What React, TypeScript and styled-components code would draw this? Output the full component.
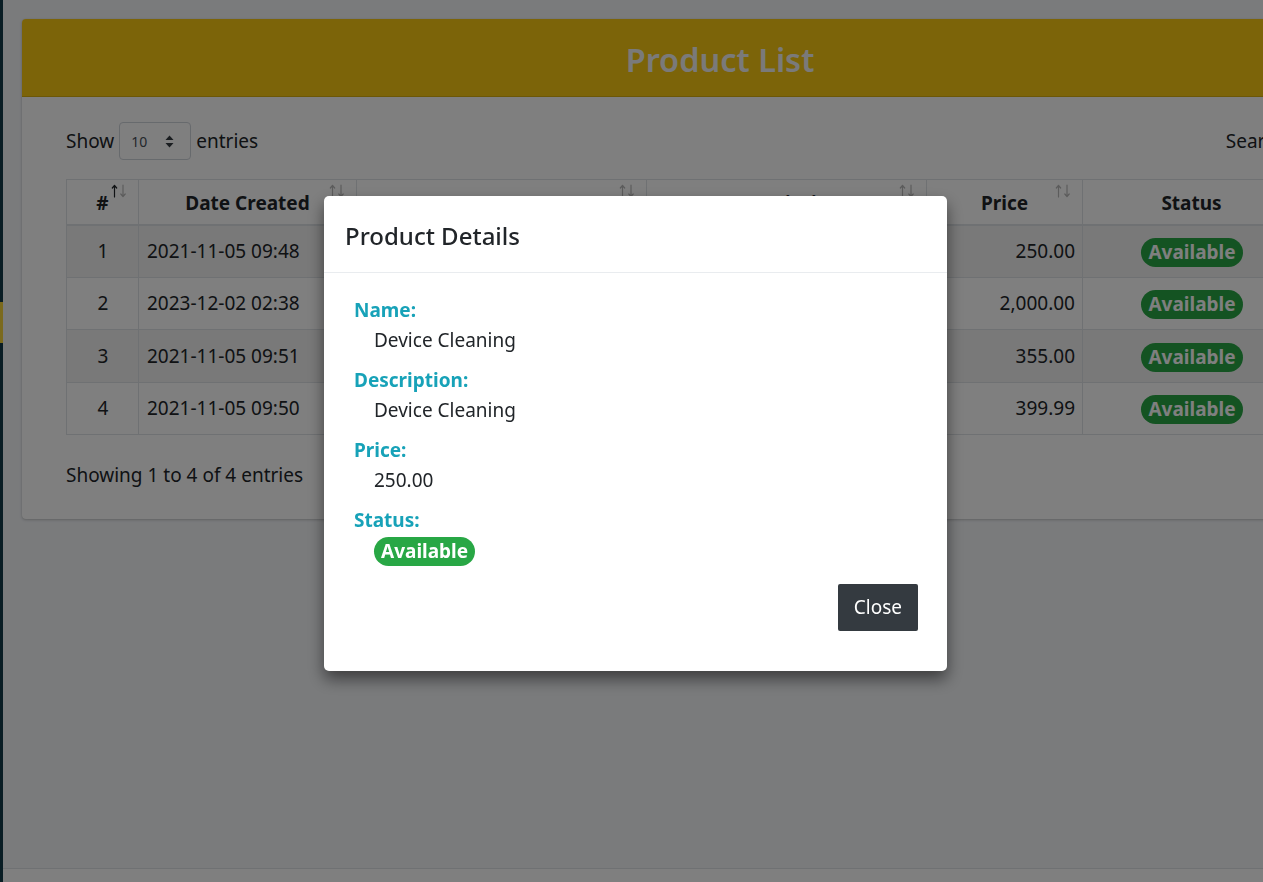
import React from "react";
import styled, { createGlobalStyle } from "styled-components";

const GlobalStyle = createGlobalStyle`
  html, body {
    margin: 0;
    overflow: hidden;
  }
  body {
    font-family: "Noto Sans", "Open Sans", sans-serif;
    font-size: 19px;
    line-height: 27px;
    color: #212529;
    background: #f4f6f9;
  }
  * {
    box-sizing: border-box;
  }
`;

type Product = {
  id: number;
  created: string;
  name: string;
  description: string;
  price: string;
};

const products: Product[] = [
  { id: 1, created: "2021-11-05 09:48", name: "Device Cleaning", description: "Device Cleaning", price: "250.00" },
  { id: 2, created: "2023-12-02 02:38", name: "Screen Replacement", description: "Screen Replacement", price: "2,000.00" },
  { id: 3, created: "2021-11-05 09:51", name: "Battery Replacement", description: "Battery Replacement", price: "355.00" },
  { id: 4, created: "2021-11-05 09:50", name: "Software Update", description: "Software Update", price: "399.99" },
];

const columns = [
  { label: "#", width: 72, sort: "asc" },
  { label: "Date Created", width: 218, sort: "none" },
  { label: "Name", width: 290, sort: "none" },
  { label: "Description", width: 280, sort: "none" },
  { label: "Price", width: 156, sort: "none" },
  { label: "Status", width: 218, sort: "" },
  { label: "Action", width: 74, sort: "" },
];

const SelectArrows = () => (
  <svg width="9" height="13" viewBox="0 0 9 13">
    <path d="M4.5 0.5 L8.5 5 H0.5 Z" fill="#343a40" />
    <path d="M4.5 12.5 L8.5 8 H0.5 Z" fill="#343a40" />
  </svg>
);

// datatables sort indicator: ↑ and ↓, the up one dark when sorted ascending
const SortIcon = ({ asc }: { asc: boolean }) => (
  <svg width="16" height="14" viewBox="0 0 16 14">
    <g fill="none" strokeWidth="1.2" strokeLinecap="round" strokeLinejoin="round">
      <path d="M3.5 13 V1.5 M1.3 4 L3.5 1.3 L5.7 4" stroke={asc ? "#212529" : "#b8b8b8"} />
      <path d="M12 1 V12.5 M9.8 10 L12 12.7 L14.2 10" stroke="#b8b8b8" />
    </g>
  </svg>
);

const App = () => {
  const current = products[0];
  return (
    <>
      <GlobalStyle />
      <Page>
        <Sidebar>
          <SidebarMark />
        </Sidebar>
        <Main>
          <Content>
            <Card>
              <CardHeader>
                <CardTitle>Product List</CardTitle>
              </CardHeader>
              <CardBody>
                <TableTools>
                  <LengthControl>
                    Show
                    <FakeSelect>
                      <span>10</span>
                      <SelectArrows />
                    </FakeSelect>
                    entries
                  </LengthControl>
                  <SearchControl>
                    Search:
                    <SearchInput type="search" />
                  </SearchControl>
                </TableTools>
                <Table>
                  <colgroup>
                    {columns.map((c) => (
                      <col key={c.label} style={{ width: c.width }} />
                    ))}
                  </colgroup>
                  <thead>
                    <tr>
                      {columns.map((c) => (
                        <Th key={c.label}>
                          {c.label}
                          {c.sort && (
                            <SortSlot>
                              <SortIcon asc={c.sort === "asc"} />
                            </SortSlot>
                          )}
                        </Th>
                      ))}
                    </tr>
                  </thead>
                  <tbody>
                    {products.map((p, i) => (
                      <Row key={p.id} $striped={i % 2 === 0}>
                        <Td $align="center">{p.id}</Td>
                        <Td>{p.created}</Td>
                        <Td>{p.name}</Td>
                        <Td>{p.description}</Td>
                        <Td $align="right">{p.price}</Td>
                        <Td $align="center">
                          <Badge>Available</Badge>
                        </Td>
                        <Td $align="center" />
                      </Row>
                    ))}
                  </tbody>
                </Table>
                <TableInfo>Showing 1 to 4 of 4 entries</TableInfo>
              </CardBody>
            </Card>
          </Content>
          <Footer />
        </Main>
      </Page>

      <Backdrop>
        <Modal>
          <ModalHeader>
            <ModalTitle>Product Details</ModalTitle>
          </ModalHeader>
          <ModalBody>
            <DetailList>
              <dt>Name:</dt>
              <dd>{current.name}</dd>
              <dt>Description:</dt>
              <dd>{current.description}</dd>
              <dt>Price:</dt>
              <dd>{current.price}</dd>
              <dt>Status:</dt>
              <dd>
                <Badge>Available</Badge>
              </dd>
            </DetailList>
          </ModalBody>
          <ModalFooter>
            <CloseButton type="button">Close</CloseButton>
          </ModalFooter>
        </Modal>
      </Backdrop>
    </>
  );
};

export default App;

/** page frame */
const Page = styled.div`
  display: flex;
  min-height: 882px;
`;
const Sidebar = styled.aside`
  flex-shrink: 0;
  width: 3px;
  padding-top: 302px;
  background: #123a48;
  box-shadow: 0 14px 28px rgba(0, 0, 0, 0.25), 0 10px 10px rgba(0, 0, 0, 0.22);
`;
const SidebarMark = styled.div`
  height: 41px;
  background: #f7d43a;
`;
const Main = styled.div`
  display: flex;
  flex-direction: column;
  flex: 1;
  min-width: 0;
  background: #f4f6f9;
`;
const Content = styled.main`
  min-height: 868px;
  padding: 19px 0 0 19px;
`;
const Footer = styled.footer`
  height: 57px;
  background: #ffffff;
  border-top: 1px solid #dee2e6;
`;

/** card */
const Card = styled.section`
  width: 1396px;
  background: #ffffff;
  border-radius: 4px;
  box-shadow: 0 0 1px rgba(0, 0, 0, 0.125), 0 1px 3px rgba(0, 0, 0, 0.2);
  overflow: hidden;
`;
const CardHeader = styled.header`
  display: flex;
  justify-content: center;
  align-items: center;

  height: 78px;
  padding-top: 4px;
  background: #f9c912;
  border-bottom: 1px solid rgba(0, 0, 0, 0.125);
`;
const CardTitle = styled.h3`
  margin: 0;
  font-size: 32.5px;
  line-height: 40px;
  font-weight: 600;
  color: #f5f5f5;
`;
const CardBody = styled.div`
  padding: 25px 44px 30px;
`;

/** datatables controls */
const TableTools = styled.div`
  display: flex;
  justify-content: space-between;
  align-items: center;
  margin-bottom: 19px;
`;
const LengthControl = styled.label`
  display: flex;
  align-items: center;
  gap: 5px;
`;
const FakeSelect = styled.div`
  display: flex;
  align-items: center;
  justify-content: space-between;

  width: 72px;
  height: 38px;
  padding: 0 16px 0 11px;

  border: 1px solid #ced4da;
  border-radius: 4px;
  font-size: 14px;
  color: #495057;
`;
const SearchControl = styled.label`
  display: flex;
  align-items: center;
  gap: 5px;
  padding-left: 2px;
`;
const SearchInput = styled.input`
  width: 78px;
  height: 38px;
  border: 1px solid #ced4da;
  border-radius: 4px;
`;

/** table */
const Table = styled.table`
  width: 1308px;
  table-layout: fixed;
  border-collapse: collapse;
  border: 1px solid #dee2e6;
`;
const Th = styled.th`
  position: relative;
  height: 45px;
  padding: 10px 8px 6px;
  border: 1px solid #dee2e6;
  border-bottom-width: 2px;
  font-weight: 700;
  text-align: center;
  white-space: nowrap;
`;
const SortSlot = styled.span`
  position: absolute;
  top: 4px;
  right: 11px;
  display: flex;
`;
const Row = styled.tr<{ $striped: boolean }>`
  background: ${(p) => (p.$striped ? "rgba(0, 0, 0, 0.05)" : "transparent")};
`;
const Td = styled.td<{ $align?: "left" | "center" | "right" }>`
  padding: 12px 7px 12px 8px;
  border: 1px solid #dee2e6;
  line-height: 27px;
  text-align: ${(p) => p.$align ?? "left"};
  white-space: nowrap;
`;
const Badge = styled.span`
  display: inline-block;
  margin: -2px 0;
  padding: 1px 7px;
  border-radius: 15px;
  background: #28a745;
  color: #ffffff;
  font-weight: 700;
  line-height: 27px;
  vertical-align: middle;
`;
const TableInfo = styled.div`
  margin-top: 27px;
`;

/** modal */
const Backdrop = styled.div`
  position: fixed;
  inset: 0;
  z-index: 1050;
  display: flex;
  justify-content: center;
  align-items: flex-start;
  padding: 196px 0 0 8px;
  background: rgba(0, 0, 0, 0.5);
`;
const Modal = styled.div`
  width: 623px;
  background: #ffffff;
  border-radius: 5px;
  box-shadow: 0 8px 16px rgba(0, 0, 0, 0.5);
`;
const ModalHeader = styled.div`
  padding: 22px 21px 18px;
  border-bottom: 1px solid #e9ecef;
`;
const ModalTitle = styled.h4`
  margin: 0;
  font-size: 24px;
  font-weight: 500;
  line-height: 36px;
`;
const ModalBody = styled.div`
  padding: 22px 30px 0;
`;
const DetailList = styled.dl`
  margin: 0;
  line-height: 30px;

  & > dt {
    font-weight: 700;
    color: #17a2b8;
  }
  & > dd {
    margin: 0 0 10px 20px;
  }
`;
const ModalFooter = styled.div`
  display: flex;
  justify-content: flex-end;
  padding: 9px 29px 40px;
`;
const CloseButton = styled.button`
  padding: 10px 16px;
  border: none;
  border-radius: 2px;
  background: #343a40;
  color: #ffffff;
  font-family: inherit;
  font-size: 19px;
  line-height: 27px;
`;
